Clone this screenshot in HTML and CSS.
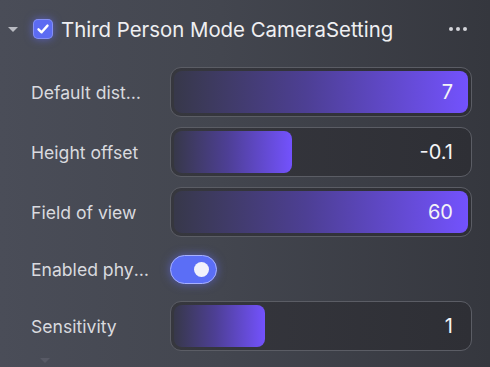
FILE: index.html
```html
<!DOCTYPE html>
<html>
<head>
<meta charset="utf-8">
<link rel="stylesheet" href="styles.css">
</head>
<body>
<div class="panel">
  <div class="header">
    <span class="caret"></span>
    <span class="check">
      <svg width="14" height="14" viewBox="0 0 14 14"><path d="M2.5 7.3 L5.6 10.3 L11.5 3.6" fill="none" stroke="#fff" stroke-width="2.4" stroke-linecap="round" stroke-linejoin="round"/></svg>
    </span>
    <span class="title">Third Person Mode CameraSetting</span>
    <span class="more"><i></i><i></i><i></i></span>
  </div>
  <div class="rows">
    <div class="row">
      <div class="label">Default distance</div>
      <div class="slider"><div class="fill" style="width:100%"></div><span class="value">7</span></div>
    </div>
    <div class="row">
      <div class="label">Height offset</div>
      <div class="slider"><div class="fill" style="width:40%"></div><span class="value">-0.1</span></div>
    </div>
    <div class="row">
      <div class="label">Field of view</div>
      <div class="slider"><div class="fill" style="width:100%"></div><span class="value">60</span></div>
    </div>
    <div class="row toggle-row">
      <div class="label">Enabled physics</div>
      <div class="toggle"><span class="knob"></span></div>
    </div>
    <div class="row">
      <div class="label">Sensitivity</div>
      <div class="slider"><div class="fill" style="width:31%"></div><span class="value">1</span></div>
    </div>
  </div>
  <div class="next"><span class="caret faint"></span></div>
</div>
</body>
</html>
```
FILE: styles.css
```css
html, body {
  margin: 0;
  padding: 0;
  width: 490px;
  height: 367px;
  overflow: hidden;
}
body {
  font-family: Inter, "Noto Sans", sans-serif;
  color: #e6e6ea;
  background: linear-gradient(90deg, #4a4d58 0%, #43464f 45%, #35373e 100%);
}
.panel {
  padding: 0 18px 0 0;
}
.header {
  height: 57px;
  display: flex;
  align-items: center;
  padding-left: 8px;
  padding-top: 1px;
  box-sizing: border-box;
}
.caret {
  width: 0;
  height: 0;
  border-left: 5px solid transparent;
  border-right: 5px solid transparent;
  border-top: 5px solid #b9bbc2;
  margin-right: 15px;
}
.check {
  width: 20px;
  height: 20px;
  border-radius: 5px;
  background: #5c6bf2;
  box-shadow: 0 0 8px rgba(100, 110, 255, 0.6), inset 0 0 0 1px rgba(255,255,255,0.25);
  display: flex;
  align-items: center;
  justify-content: center;
  margin-right: 8px;
}
.title {
  font-size: 20.4px;
  color: #efeff2;
  flex: 1;
}
.more {
  display: flex;
  gap: 3px;
  margin-right: 5px;
}
.more i {
  width: 4px;
  height: 4px;
  border-radius: 50%;
  background: #d4d5da;
}
.rows {
  display: flex;
  flex-direction: column;
  gap: 10px;
  padding-top: 10px;
}
.row {
  display: flex;
  align-items: center;
  height: 50px;
}
.toggle-row {
  height: 44px;
}
.label {
  width: 119px;
  margin-left: 31px;
  margin-right: 20px;
  font-size: 17.6px;
  color: #d9dadf;
  white-space: nowrap;
  overflow: hidden;
  text-overflow: ellipsis;
}
.slider {
  position: relative;
  width: 302px;
  height: 50px;
  box-sizing: border-box;
  border: 1px solid #5b5d65;
  border-radius: 11px;
  padding: 3px;
  background: linear-gradient(90deg, #36373e 0%, #2e2f35 100%);
  display: flex;
  align-items: stretch;
}
.fill {
  height: 42px;
  border-radius: 8px;
  background: linear-gradient(90deg, #37384a 0%, #4d3f94 45%, #7352fd 100%);
}
.value {
  position: absolute;
  right: 18px;
  top: 0;
  bottom: 0;
  display: flex;
  align-items: center;
  font-size: 20px;
  color: #f4f4f7;
}
.toggle {
  width: 47px;
  height: 29px;
  box-sizing: border-box;
  border-radius: 15px;
  background: #5b6ef6;
  border: 1px solid #a6b0ff;
  box-shadow: 0 0 10px rgba(100, 110, 255, 0.55);
  display: flex;
  align-items: center;
  justify-content: flex-end;
  padding-right: 7px;
}
.knob {
  width: 15px;
  height: 15px;
  border-radius: 50%;
  background: #f1f1fb;
}
.next {
  padding-left: 40px;
  padding-top: 12px;
}
.faint {
  border-top-color: rgba(200, 200, 210, 0.12);
}
```
